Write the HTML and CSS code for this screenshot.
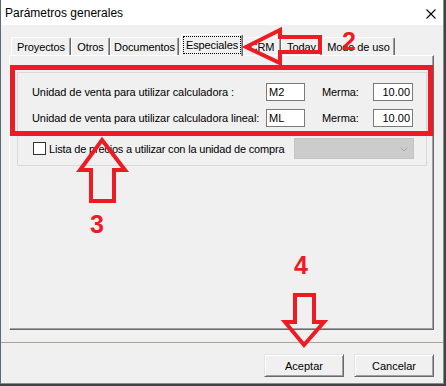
FILE: index.html
```html
<!DOCTYPE html>
<html lang="es">
<head>
<meta charset="utf-8">
<title>Parámetros generales</title>
<link rel="stylesheet" href="styles.css">
</head>
<body>
<div class="window">
  <div class="titlebar">
    <span class="title">Parámetros generales</span>
    <svg class="close" width="10" height="10" viewBox="0 0 10 10"><path d="M0.5 0.5 L9.5 9.5 M9.5 0.5 L0.5 9.5" stroke="#000" stroke-width="1.1" fill="none"/></svg>
  </div>
  <div class="client">
    <div class="tabstrip">
      <div class="tab w-proy">Proyectos</div>
      <div class="tab w-otros">Otros</div>
      <div class="tab w-docs">Documentos</div>
      <div class="tab tab-active w-esp"><span class="focus">Especiales</span></div>
      <div class="tab w-crm">CRM</div>
      <div class="tab w-today">Today</div>
      <div class="tab w-modo">Modo de uso</div>
    </div>
    <div class="panel">
      <div class="group">
        <div class="grid">
          <span class="lbl">Unidad de venta para utilizar calculadora :</span>
          <span class="input">M2</span>
          <span></span>
          <span class="lbl">Merma:</span>
          <span class="input num">10.00</span>
          <span class="lbl">Unidad de venta para utilizar calculadora lineal:</span>
          <span class="input">ML</span>
          <span></span>
          <span class="lbl">Merma:</span>
          <span class="input num">10.00</span>
        </div>
        <div class="check-row">
          <span class="checkbox"></span>
          <span class="lbl">Lista de precios a utilizar con la unidad de compra</span>
          <span class="combo">
            <svg class="chev" width="8" height="5" viewBox="0 0 8 5"><path d="M0.5 0.5 L4 4 L7.5 0.5" stroke="#a6a6a6" stroke-width="1" fill="none"/></svg>
          </span>
        </div>
      </div>
    </div>
    <div class="separator"></div>
    <div class="buttons">
      <span class="btn">Aceptar</span>
      <span class="btn">Cancelar</span>
    </div>
  </div>
</div>
<svg class="annotations" width="446" height="386" viewBox="0 0 446 386">
  <rect x="12.5" y="67.5" width="418" height="66" fill="none" stroke="#ed1c24" stroke-width="5"/>
  <polygon points="246,47 280,30 280,37 320,37 320,52 280,52 280,63" fill="none" stroke="#ed1c24" stroke-width="4" stroke-linejoin="miter"/>
  <polygon points="102,140 125,170 114,170 114,201 91,201 91,170 80,170" fill="none" stroke="#ed1c24" stroke-width="4" stroke-linejoin="miter"/>
  <polygon points="295,295 314,295 314,322 324,322 304,345 285,322 295,322" fill="none" stroke="#ed1c24" stroke-width="4" stroke-linejoin="miter"/>
  <text x="342" y="50" class="num-label">2</text>
  <text x="90" y="233" class="num-label">3</text>
  <text x="294" y="274" class="num-label">4</text>
</svg>
</body>
</html>
```

FILE: styles.css
```css
html, body {
  margin: 0;
  padding: 0;
}
body {
  width: 446px;
  height: 386px;
  overflow: hidden;
  background: #3f4246;
  font-family: "Liberation Sans", Arial, sans-serif;
  font-size: 11px;
  color: #000;
}
.window {
  box-sizing: border-box;
  width: 444px;
  height: 384px;
  background: #f0f0f0;
  border-left: 1px solid #5a6a7c;
  border-right: 1px solid #8a8a8a;
  border-bottom: 1px solid #8a8a8a;
}
.titlebar {
  height: 25px;
  background: #fff;
  display: flex;
  align-items: center;
}
.title {
  font-size: 12px;
  padding-left: 4px;
  padding-top: 1px;
}
.close {
  margin-left: auto;
  margin-right: 7px;
  margin-top: 3px;
}
.client {
  display: flex;
  flex-direction: column;
}
.tabstrip {
  height: 30px;
  display: flex;
  align-items: flex-end;
  padding-left: 10px;
  letter-spacing: -0.1px;
}
.tab {
  box-sizing: border-box;
  height: 18px;
  display: flex;
  align-items: center;
  justify-content: center;
  background: #f0f0f0;
  border-top: 1px solid #fff;
  border-left: 1px solid #fff;
  border-right: 1px solid #696969;
  box-shadow: inset -1px 0 0 #a0a0a0;
  border-radius: 2px 2px 0 0;
  padding-top: 1px;
}
.tab-active {
  height: 22px;
  margin-left: 2px;
  margin-bottom: -1px;
  position: relative;
  z-index: 1;
  padding: 1px 1px 2px 1px;
  align-items: stretch;
}
.focus {
  flex: 1;
  display: flex;
  align-items: center;
  justify-content: center;
  border: 1px dotted #000;
  padding-bottom: 1px;
}
.w-proy { width: 60px; }
.w-otros { width: 39px; }
.w-docs { width: 69px; }
.w-esp { width: 62px; }
.w-crm { width: 38px; }
.w-today { width: 41px; }
.w-modo { width: 73px; }

.panel {
  box-sizing: border-box;
  margin-left: 8px;
  width: 425px;
  height: 275px;
  border-top: 1px solid #fff;
  border-left: 1px solid #fff;
  border-right: 1px solid #696969;
  border-bottom: 1px solid #696969;
  box-shadow: inset -1px -1px 0 #a0a0a0;
  padding: 16px 0 0 7px;
}
.group {
  box-sizing: border-box;
  width: 410px;
  height: 94px;
  border: 1px solid #d9d9d9;
  padding: 10px 0 0 14px;
}
.grid {
  display: grid;
  grid-template-columns: 234px 39px 17px 51px 40px;
  grid-auto-rows: 18px;
  row-gap: 8px;
  align-items: center;
}
.lbl {
  white-space: nowrap;
  letter-spacing: -0.08px;
}
.check-row .lbl {
  letter-spacing: -0.18px;
}
.input {
  box-sizing: border-box;
  height: 18px;
  background: #fff;
  border: 1px solid #7a7a7a;
  padding-left: 2px;
  display: flex;
  align-items: center;
}
.input.num {
  justify-content: flex-end;
  padding-left: 0;
  padding-right: 2px;
}
.check-row {
  margin-top: 11px;
  width: 382px;
  height: 21px;
  display: flex;
  align-items: center;
}
.checkbox {
  box-sizing: border-box;
  width: 13px;
  height: 13px;
  margin-left: 1px;
  margin-right: 3px;
  background: #fff;
  border: 1px solid #333;
}
.combo {
  box-sizing: border-box;
  margin-left: auto;
  width: 120px;
  height: 21px;
  background: #cccccc;
  border: 1px solid #c4c4c4;
  display: flex;
  align-items: center;
  justify-content: flex-end;
  padding-right: 5px;
}
.chev {
  display: block;
  margin-top: 1px;
}
.separator {
  margin-top: 12px;
  height: 1px;
  background: #a8a493;
}
.buttons {
  margin-top: 11px;
  display: flex;
  justify-content: flex-end;
  gap: 10px;
  padding-right: 9px;
}
.btn {
  box-sizing: border-box;
  width: 80px;
  height: 23px;
  display: flex;
  align-items: center;
  justify-content: center;
  background: #f0f0f0;
  border: 1px solid;
  border-color: #e3e3e3 #696969 #696969 #e3e3e3;
  box-shadow: inset 1px 1px 0 #fff, inset -1px -1px 0 #a0a0a0;
  padding-top: 1px;
}
.annotations {
  position: absolute;
  top: 0;
  left: 0;
  pointer-events: none;
}
.num-label {
  font-family: "Liberation Sans", Arial, sans-serif;
  font-weight: bold;
  font-size: 25px;
  fill: #ed1c24;
}
```
